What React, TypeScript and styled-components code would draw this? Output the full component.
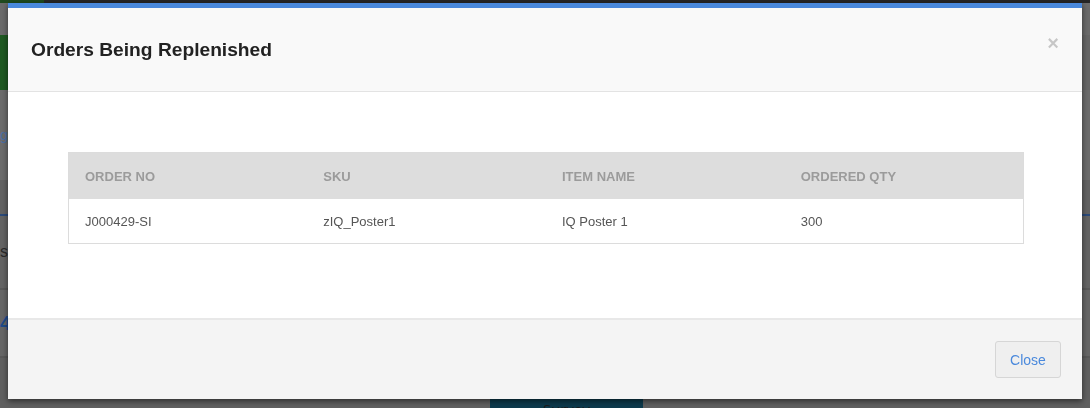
import React from "react";
import styled, { createGlobalStyle } from "styled-components";

const Global = createGlobalStyle`
  html, body { margin: 0; padding: 0; width: 1090px; height: 408px; overflow: hidden; }
  body { font-family: "Liberation Sans", Arial, sans-serif; background: #646464; }
`;

/* ---------- dimmed page behind the modal ---------- */
const Page = styled.div`
  position: fixed;
  inset: 0;
  display: flex;
  flex-direction: column;
  background: #656565;
`;

const Band = styled.div<{ $h: number; $bg: string; $line?: string }>`
  height: ${(p) => p.$h}px;
  flex: none;
  background: ${(p) => p.$bg};
  border-bottom: ${(p) => (p.$line ? `2px solid ${p.$line}` : "none")};
  display: flex;
  align-items: center;
  overflow: hidden;
`;

const Chip = styled.div<{ $w: number; $bg: string }>`
  width: ${(p) => p.$w}px;
  height: 100%;
  background: ${(p) => p.$bg};
  flex: none;
`;

const Frag = styled.span<{ $c: string; $size: number; $bold?: boolean }>`
  color: ${(p) => p.$c};
  font-size: ${(p) => p.$size}px;
  font-weight: ${(p) => (p.$bold ? 700 : 400)};
  line-height: 1;
`;

const BottomBand = styled.div`
  flex: 1;
  display: flex;
  align-items: flex-end;
  background: #606060;
`;

const SurveyBtn = styled.div`
  margin-left: 490px;
  width: 153px;
  height: 10px;
  background: #0d3a4c;
  color: #1b1b1b;
  font-family: "Open Sans", sans-serif;
  font-size: 15px;
  text-align: center;
  line-height: 22px;
`;

/* ---------- modal ---------- */
const Backdrop = styled.div`
  position: fixed;
  inset: 0;
  padding: 3px 8px 9px 8px;
  display: flex;
`;

const Modal = styled.div`
  flex: 1;
  display: flex;
  flex-direction: column;
  background: #fff;
  border-top: 5px solid #4a89dc;
  box-shadow: 0 2px 6px rgba(0, 0, 0, 0.55);
  overflow: hidden;
`;

const Header = styled.div`
  height: 83px;
  flex: none;
  display: flex;
  align-items: center;
  justify-content: space-between;
  padding: 0 23px 0 23px;
  background: #f9f9f9;
  border-bottom: 1px solid #e3e3e3;
`;

const Title = styled.h4`
  margin: 0;
  font-size: 19.2px;
  font-weight: 700;
  color: #222;
  padding-top: 1px;
`;

const CloseX = styled.button`
  border: 0;
  background: none;
  padding: 0;
  margin-top: -14px;
  font-family: "Liberation Sans", Arial, sans-serif;
  font-size: 20px;
  font-weight: 700;
  line-height: 1;
  color: #000;
  opacity: 0.2;
  cursor: pointer;
`;

const Body = styled.div`
  flex: 1;
  padding: 60px 58px 0 60px;
`;

const Table = styled.table`
  width: 100%;
  border-collapse: collapse;
  table-layout: fixed;
  border: 1px solid #dcdcdc;
`;

const Th = styled.th`
  height: 46px;
  padding: 0 16px;
  text-align: left;
  background: #dddddd;
  color: #9b9b9b;
  font-size: 13px;
  font-weight: 700;
  text-transform: uppercase;
`;

const Td = styled.td`
  height: 44px;
  padding: 0 16px;
  color: #555;
  font-size: 13px;
  background: #fff;
`;

const Footer = styled.div`
  height: 81px;
  flex: none;
  display: flex;
  align-items: flex-start;
  justify-content: flex-end;
  padding: 21px 21px 0 0;
  box-sizing: border-box;
  background: #f4f4f4;
  border-top: 2px solid #e8e8e8;
`;

const Button = styled.button`
  width: 66px;
  height: 37px;
  background: #efefef;
  border: 1px solid #d6d6d6;
  border-radius: 3px;
  color: #4a89dc;
  font-family: "Liberation Sans", Arial, sans-serif;
  font-size: 14px;
  cursor: pointer;
`;

const rows = [
  { order: "J000429-SI", sku: "zIQ_Poster1", name: "IQ Poster 1", qty: "300" },
];

export default function App() {
  return (
    <>
      <Global />
      <Page>
        <Band $h={3} $bg="#262626">
          <Chip $w={44} $bg="#1f4a1f" />
        </Band>
        <Band $h={32} $bg="#6b6b6b" />
        <Band $h={55} $bg="#666">
          <Chip $w={40} $bg="#1f5a22" />
        </Band>
        <Band $h={90} $bg="#6c6c6c">
          <Frag $c="#4a6fa5" $size={14}>g</Frag>
        </Band>
        <Band $h={34} $bg="#626262" $line="#2b4a7a" />
        <Band $h={72} $bg="#646464" $line="#595959">
          <Frag $c="#2a2a2a" $size={16}>s</Frag>
        </Band>
        <Band $h={66} $bg="#666" $line="#595959">
          <Frag $c="#1f4a8a" $size={20} $bold>4</Frag>
        </Band>
        <BottomBand>
          <SurveyBtn>Survey</SurveyBtn>
        </BottomBand>
      </Page>
      <Backdrop>
        <Modal>
          <Header>
            <Title>Orders Being Replenished</Title>
            <CloseX aria-label="Close">×</CloseX>
          </Header>
          <Body>
            <Table>
              <thead>
                <tr>
                  <Th>Order No</Th>
                  <Th>SKU</Th>
                  <Th>Item Name</Th>
                  <Th>Ordered Qty</Th>
                </tr>
              </thead>
              <tbody>
                {rows.map((r) => (
                  <tr key={r.order}>
                    <Td>{r.order}</Td>
                    <Td>{r.sku}</Td>
                    <Td>{r.name}</Td>
                    <Td>{r.qty}</Td>
                  </tr>
                ))}
              </tbody>
            </Table>
          </Body>
          <Footer>
            <Button>Close</Button>
          </Footer>
        </Modal>
      </Backdrop>
    </>
  );
}
